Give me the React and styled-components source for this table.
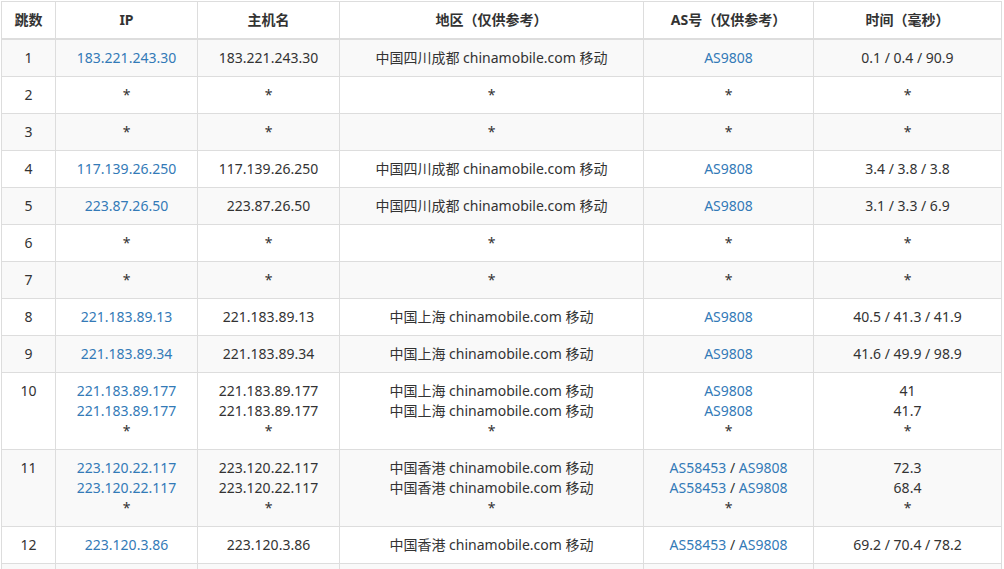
import React, { Fragment } from 'react';
import styled, { createGlobalStyle } from 'styled-components';

const GlobalStyle = createGlobalStyle`
  * {
    margin: 0;
    padding: 0;
    box-sizing: border-box;
  }

  body {
    background: #fff;
    font-family: 'Noto Sans', 'Noto Sans CJK SC', sans-serif;
    font-size: 14px;
    line-height: 20px;
    color: #333;
  }
`;

const COLORS = {
  border: '#ddd',
  stripe: '#f9f9f9',
  text: '#333',
  link: '#337ab7',
};

const Wrapper = styled.div`
  padding: 1px 2px 0 1px;
`;

const Table = styled.table`
  width: 100%;
  table-layout: fixed;
  border-collapse: collapse;
  border-spacing: 0;
  border: 1px solid ${COLORS.border};
`;

const HeadCell = styled.th`
  padding: 8px;
  font-weight: bold;
  text-align: center;
  vertical-align: bottom;
  border: 1px solid ${COLORS.border};
  border-bottom: 2px solid ${COLORS.border};
  width: ${(p) => p.$w}px;
`;

const Row = styled.tr`
  background: ${(p) => (p.$striped ? COLORS.stripe : '#fff')};
`;

const Cell = styled.td`
  padding: 8px;
  text-align: center;
  vertical-align: top;
  border: 1px solid ${COLORS.border};
  white-space: nowrap;
`;

const Line = styled.div`
  height: 20px;
`;

const Link = styled.a`
  color: ${COLORS.link};
  text-decoration: none;
`;

const COLUMNS = [
  { title: '跳数', w: 54 },
  { title: 'IP', w: 142 },
  { title: '主机名', w: 142 },
  { title: '地区（仅供参考）', w: 304 },
  { title: 'AS号（仅供参考）', w: 170 },
  { title: '时间（毫秒）', w: 188 },
];

const SC = '中国四川成都 chinamobile.com 移动';
const SH = '中国上海 chinamobile.com 移动';
const HK = '中国香港 chinamobile.com 移动';
const STAR = { ip: '*', host: '*', geo: '*', as: [], time: '*' };

const HOPS = [
  { n: 1, lines: [{ ip: '183.221.243.30', host: '183.221.243.30', geo: SC, as: ['AS9808'], time: '0.1 / 0.4 / 90.9' }] },
  { n: 2, lines: [STAR] },
  { n: 3, lines: [STAR] },
  { n: 4, lines: [{ ip: '117.139.26.250', host: '117.139.26.250', geo: SC, as: ['AS9808'], time: '3.4 / 3.8 / 3.8' }] },
  { n: 5, lines: [{ ip: '223.87.26.50', host: '223.87.26.50', geo: SC, as: ['AS9808'], time: '3.1 / 3.3 / 6.9' }] },
  { n: 6, lines: [STAR] },
  { n: 7, lines: [STAR] },
  { n: 8, lines: [{ ip: '221.183.89.13', host: '221.183.89.13', geo: SH, as: ['AS9808'], time: '40.5 / 41.3 / 41.9' }] },
  { n: 9, lines: [{ ip: '221.183.89.34', host: '221.183.89.34', geo: SH, as: ['AS9808'], time: '41.6 / 49.9 / 98.9' }] },
  {
    n: 10,
    lines: [
      { ip: '221.183.89.177', host: '221.183.89.177', geo: SH, as: ['AS9808'], time: '41' },
      { ip: '221.183.89.177', host: '221.183.89.177', geo: SH, as: ['AS9808'], time: '41.7' },
      STAR,
    ],
  },
  {
    n: 11,
    lines: [
      { ip: '223.120.22.117', host: '223.120.22.117', geo: HK, as: ['AS58453', 'AS9808'], time: '72.3' },
      { ip: '223.120.22.117', host: '223.120.22.117', geo: HK, as: ['AS58453', 'AS9808'], time: '68.4' },
      STAR,
    ],
  },
  { n: 12, lines: [{ ip: '223.120.3.86', host: '223.120.3.86', geo: HK, as: ['AS58453', 'AS9808'], time: '69.2 / 70.4 / 78.2' }] },
];

const AsList = ({ list }) => {
  if (!list.length) return '*';
  return list.map((as, i) => (
    <Fragment key={as}>
      {i > 0 && ' / '}
      <Link href='#'>{as}</Link>
    </Fragment>
  ));
};

const App = () => {
  return (
    <Fragment>
      <GlobalStyle />
      <Wrapper>
        <Table>
          <thead>
            <tr>
              {COLUMNS.map((c) => (
                <HeadCell key={c.title} $w={c.w}>
                  {c.title}
                </HeadCell>
              ))}
            </tr>
          </thead>
          <tbody>
            {HOPS.map((hop) => (
              <Row key={hop.n} $striped={hop.n % 2 === 1}>
                <Cell>{hop.n}</Cell>
                <Cell>
                  {hop.lines.map((l, i) => (
                    <Line key={i}>{l.ip === '*' ? '*' : <Link href='#'>{l.ip}</Link>}</Line>
                  ))}
                </Cell>
                <Cell>
                  {hop.lines.map((l, i) => (
                    <Line key={i}>{l.host}</Line>
                  ))}
                </Cell>
                <Cell>
                  {hop.lines.map((l, i) => (
                    <Line key={i}>{l.geo}</Line>
                  ))}
                </Cell>
                <Cell>
                  {hop.lines.map((l, i) => (
                    <Line key={i}>
                      <AsList list={l.as} />
                    </Line>
                  ))}
                </Cell>
                <Cell>
                  {hop.lines.map((l, i) => (
                    <Line key={i}>{l.time}</Line>
                  ))}
                </Cell>
              </Row>
            ))}
            {/* next hop, cut off by the bottom edge */}
            <Row $striped>
              {COLUMNS.map((c) => (
                <Cell key={c.title}>
                  <Line />
                </Cell>
              ))}
            </Row>
          </tbody>
        </Table>
      </Wrapper>
    </Fragment>
  );
};

export default App;
